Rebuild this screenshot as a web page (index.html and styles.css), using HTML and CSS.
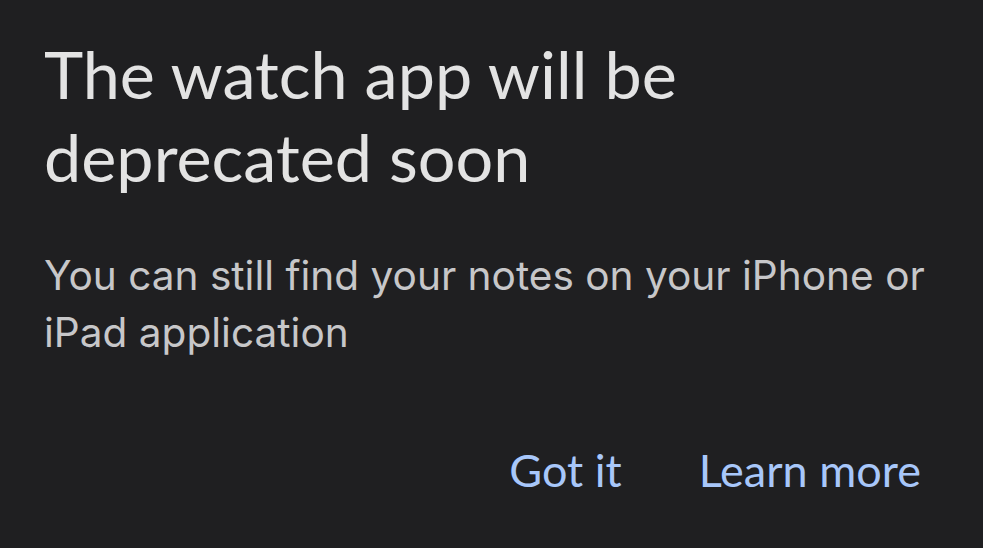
FILE: index.html
```html
<!DOCTYPE html>
<html lang="en">
<head>
    <meta charset="UTF-8">
    <meta name="viewport" content="width=device-width, initial-scale=1.0">
    <title>Watch app</title>
    <link rel="stylesheet" href="styles.css">
</head>
<body>
    <!-- Deprecation Dialog -->
    <section class="dialog">
        <h1 class="dialog-title">The watch app will be deprecated soon</h1>
        <p class="dialog-text">You can still find your notes on your iPhone or iPad application</p>
        <div class="dialog-actions">
            <button class="dialog-btn">Got it</button>
            <button class="dialog-btn">Learn more</button>
        </div>
    </section>
</body>
</html>
```

FILE: styles.css
```css
html, body {
    margin: 0;
    padding: 0;
    height: 100%;
}
body {
    background-color: #1f1f21;
    font-family: "Lato", "Open Sans", sans-serif;
}
.dialog {
    padding: 32px 44px 0 44px;
}
.dialog-title {
    margin: 0;
    width: 720px;
    font-size: 66.5px;
    font-weight: 400;
    line-height: 83px;
    color: #e3e3e3;
}
.dialog-text {
    margin: 49px 0 0 0;
    font-family: "Inter", "Roboto", sans-serif;
    font-size: 40.6px;
    line-height: 57px;
    color: #c7c7c9;
}
.dialog-actions {
    display: flex;
    justify-content: flex-end;
    gap: 77px;
    margin-top: 82px;
    padding-right: 18px;
}
.dialog-btn {
    background: none;
    border: none;
    padding: 0;
    font-family: "Lato", "Open Sans", sans-serif;
    font-size: 45px;
    font-weight: 400;
    line-height: 54px;
    color: #a8c7fa;
    cursor: pointer;
}
```
